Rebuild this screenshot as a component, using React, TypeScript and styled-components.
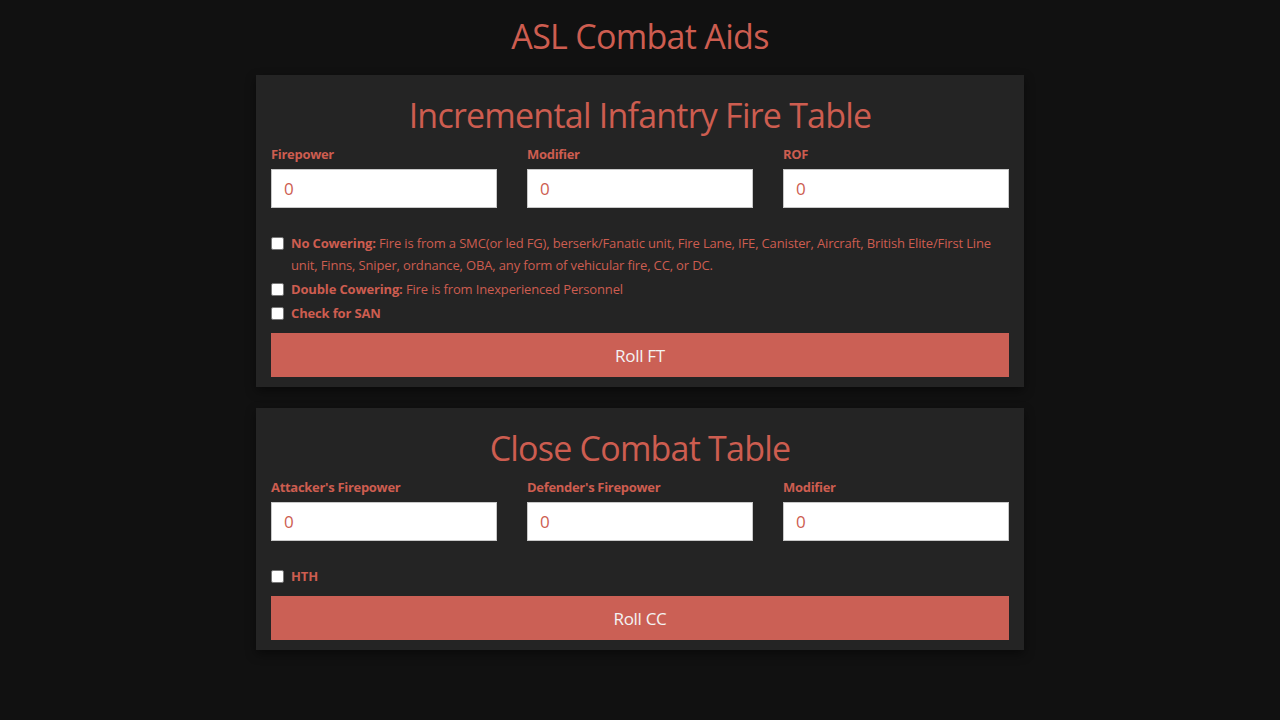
import React from "react";
import styled, { createGlobalStyle } from "styled-components";

const FONT = `"Open Sans", "Noto Sans", sans-serif`;
const RED = "#cd5d50";

const Global = createGlobalStyle`
  html, body { margin: 0; padding: 0; background: #111111; }
  body { font-family: ${FONT}; color: ${RED}; }
  * { box-sizing: border-box; }
`;

const Page = styled.div`
  display: flex;
  flex-direction: column;
  align-items: center;
  padding-top: 12px;
`;

const Title = styled.h1`
  margin: 0;
  font-weight: 400;
  font-size: 34px;
  line-height: 48px;
  letter-spacing: -0.7px;
  color: ${RED};
  height: 63px;
`;

const Card = styled.section`
  width: 768px;
  background: #242424;
  box-shadow: 0 4px 10px rgba(0, 0, 0, 0.45);
  padding: 16px 15px 10px;
  margin-bottom: 21px;
`;

const CardTitle = styled.h2`
  margin: 0;
  text-align: center;
  font-weight: 400;
  font-size: 34px;
  line-height: 48px;
  letter-spacing: -0.78px;
  color: ${RED};
`;

const Fields = styled.div`
  display: grid;
  grid-template-columns: repeat(3, 1fr);
  column-gap: 30px;
  margin-top: 7px;
`;

const Field = styled.label`
  display: flex;
  flex-direction: column;
`;

const FieldLabel = styled.span`
  font-size: 13px;
  font-weight: 700;
  line-height: 16px;
  letter-spacing: -0.3px;
  margin-bottom: 7px;
`;

const Input = styled.input`
  height: 39px;
  width: 100%;
  border: 1px solid #c8c8c8;
  background: #ffffff;
  color: ${RED};
  font-family: ${FONT};
  font-size: 17px;
  padding: 0 12px;
  outline: none;
`;

const Checks = styled.div<{ $top: number }>`
  display: flex;
  flex-direction: column;
  gap: 2px;
  margin-top: ${(p) => p.$top}px;
`;

const CheckRow = styled.label`
  display: flex;
  align-items: flex-start;
  font-size: 13px;
  line-height: 22px;
  letter-spacing: -0.15px;
`;

const Box = styled.input`
  appearance: none;
  width: 13px;
  height: 13px;
  margin: 5px 7px 0 0;
  flex: none;
  background: #ffffff;
  border: 1px solid #767676;
  border-radius: 2px;
`;

const Strong = styled.b`
  font-weight: 700;
`;

const Button = styled.button<{ $top: number }>`
  display: block;
  width: 100%;
  height: 44px;
  margin-top: ${(p) => p.$top}px;
  border: none;
  background: #cb6055;
  color: #f3f3f3;
  font-family: ${FONT};
  font-size: 17px;
  letter-spacing: -0.3px;
`;

const fields1 = ["Firepower", "Modifier", "ROF"];
const fields2 = ["Attacker's Firepower", "Defender's Firepower", "Modifier"];

export default function App() {
  return (
    <>
      <Global />
      <Page>
        <Title>ASL Combat Aids</Title>
        <Card>
          <CardTitle>Incremental Infantry Fire Table</CardTitle>
          <Fields>
            {fields1.map((f) => (
              <Field key={f}>
                <FieldLabel>{f}</FieldLabel>
                <Input defaultValue="0" />
              </Field>
            ))}
          </Fields>
          <Checks $top={24}>
            <CheckRow>
              <Box type="checkbox" />
              <span>
                <Strong>No Cowering:</Strong> Fire is from a SMC(or led FG), berserk/Fanatic unit, Fire Lane, IFE,
                Canister, Aircraft, British Elite/First Line unit, Finns, Sniper, ordnance, OBA, any form of vehicular
                fire, CC, or DC.
              </span>
            </CheckRow>
            <CheckRow>
              <Box type="checkbox" />
              <span>
                <Strong>Double Cowering:</Strong> Fire is from Inexperienced Personnel
              </span>
            </CheckRow>
            <CheckRow>
              <Box type="checkbox" />
              <Strong>Check for SAN</Strong>
            </CheckRow>
          </Checks>
          <Button $top={9}>Roll FT</Button>
        </Card>
        <Card>
          <CardTitle>Close Combat Table</CardTitle>
          <Fields>
            {fields2.map((f) => (
              <Field key={f}>
                <FieldLabel>{f}</FieldLabel>
                <Input defaultValue="0" />
              </Field>
            ))}
          </Fields>
          <Checks $top={24}>
            <CheckRow>
              <Box type="checkbox" />
              <Strong>HTH</Strong>
            </CheckRow>
          </Checks>
          <Button $top={9}>Roll CC</Button>
        </Card>
      </Page>
    </>
  );
}
